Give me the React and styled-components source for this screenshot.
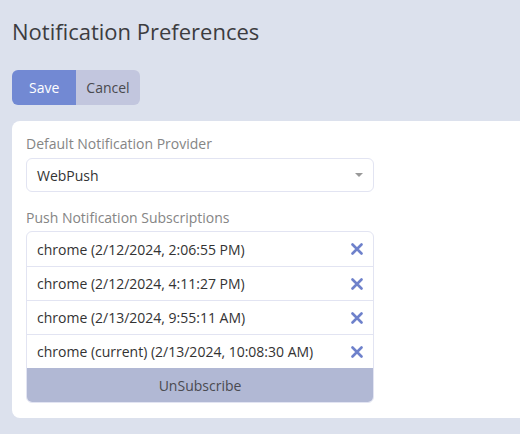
import React from "react";
import styled, { createGlobalStyle } from "styled-components";

const Global = createGlobalStyle`
  html, body { margin: 0; padding: 0; }
  body {
    background: #dce1ed;
    font-family: "Open Sans", "Noto Sans", sans-serif;
    color: #444;
    width: 520px;
    height: 434px;
    overflow: hidden;
  }
`;

const Page = styled.div`
  padding: 16px 0 0 12px;
`;

const Title = styled.h1`
  margin: 0;
  font-size: 22px;
  font-weight: 400;
  line-height: 30px;
  color: #3c3c40;
`;

const ButtonGroup = styled.div`
  display: inline-flex;
  margin-top: 24px;
  border-radius: 6px;
  overflow: hidden;
`;

const Btn = styled.button`
  border: none;
  margin: 0;
  height: 35px;
  padding: 0 ${(p) => p.$px}px;
  font-family: inherit;
  font-size: 14px;
  background: ${(p) => (p.$primary ? "#7289d3" : "#c2c6de")};
  color: ${(p) => (p.$primary ? "#fff" : "#4a4a4e")};
  cursor: pointer;
`;

const Card = styled.div`
  margin-top: 16px;
  background: #fff;
  border-radius: 8px 0 0 8px;
  padding: 13px 0 15px 14px;
`;

const Label = styled.div`
  font-size: 14px;
  color: #858585;
  line-height: 20px;
  margin-bottom: ${(p) => p.$mb}px;
`;

const Select = styled.div`
  width: 348px;
  height: 34px;
  box-sizing: border-box;
  border: 1px solid #e2e4f2;
  border-radius: 6px;
  display: flex;
  align-items: center;
  justify-content: space-between;
  padding: 0 10px;
  font-size: 14px;
  color: #333;
`;

const Caret = styled.span`
  width: 0;
  height: 0;
  border-left: 4px solid transparent;
  border-right: 4px solid transparent;
  border-top: 4px solid #999;
`;

const Section = styled.div`
  margin-top: ${(p) => p.$mt}px;
`;

const List = styled.div`
  width: 348px;
  border: 1px solid #e2e4f2;
  border-radius: 6px;
  overflow: hidden;
  box-sizing: border-box;
`;

const Row = styled.div`
  height: 34px;
  box-sizing: border-box;
  display: flex;
  align-items: center;
  justify-content: space-between;
  padding: 0 10px;
  font-size: 14px;
  color: #333;
  border-top: ${(p) => (p.$first ? "none" : "1px solid #e2e4f2")};
`;

const Remove = styled.span`
  display: flex;
  align-items: center;
  color: #6e81cb;
  cursor: pointer;
`;

const Unsub = styled.button`
  display: block;
  width: 100%;
  height: 34px;
  border: none;
  margin: 0;
  background: #b1b8d4;
  font-family: inherit;
  font-size: 14px;
  color: #4a4a50;
`;

const XIcon = () => (
  <svg width="12" height="12" viewBox="0 0 12 12">
    <path d="M1.5 1.5 L10.5 10.5 M10.5 1.5 L1.5 10.5" stroke="currentColor" strokeWidth="2.6" strokeLinecap="round" />
  </svg>
);

const subs = [
  "chrome (2/12/2024, 2:06:55 PM)",
  "chrome (2/12/2024, 4:11:27 PM)",
  "chrome (2/13/2024, 9:55:11 AM)",
  "chrome (current) (2/13/2024, 10:08:30 AM)",
];

export default function App() {
  return (
    <>
      <Global />
      <Page>
        <Title>Notification Preferences</Title>
        <ButtonGroup>
          <Btn $primary $px={17}>Save</Btn>
          <Btn $px={10}>Cancel</Btn>
        </ButtonGroup>
        <Card>
          <Label $mb={4}>Default Notification Provider</Label>
          <Select>
            <span>WebPush</span>
            <Caret />
          </Select>
          <Section $mt={16}>
            <Label $mb={3}>Push Notification Subscriptions</Label>
            <List>
              {subs.map((s, i) => (
                <Row key={s} $first={i === 0}>
                  <span>{s}</span>
                  <Remove><XIcon /></Remove>
                </Row>
              ))}
              <Unsub>UnSubscribe</Unsub>
            </List>
          </Section>
        </Card>
      </Page>
    </>
  );
}
